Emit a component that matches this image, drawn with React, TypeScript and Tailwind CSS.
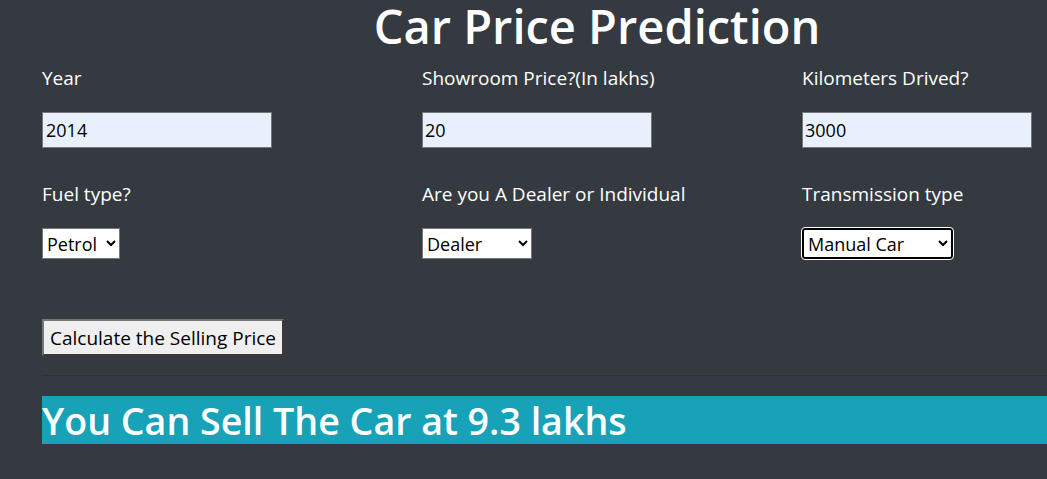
import { useState } from 'react';

const font = { fontFamily: '"Open Sans", "Noto Sans", sans-serif' };

function Label({ children }: { children: React.ReactNode }) {
    return <label className="block h-[36px] text-[19px] leading-[28px] text-white">{children}</label>;
}

export default function App() {
    const [year, setYear] = useState('2014');
    const [price, setPrice] = useState('20');
    const [kms, setKms] = useState('3000');

    return (
        <div className="min-h-[479px] w-full overflow-hidden bg-[#343a40]" style={font}>
            <h1 className="pl-[147px] pt-[1px] text-center text-[47px] font-semibold leading-[50px] text-white">
                Car Price Prediction
            </h1>
            <div className="mt-[13px] pl-[42px]">
                <div className="grid grid-cols-[380px_380px_1fr]">
                    <div>
                        <Label>Year</Label>
                        <input
                            value={year}
                            onChange={(e) => setYear(e.target.value)}
                            className="mt-[12px] h-[36px] w-[230px] border border-[#767676] bg-[#e8f0fe] px-[3px] text-[18px] text-black outline-none"
                        />
                    </div>
                    <div>
                        <Label>Showroom Price?(In lakhs)</Label>
                        <input
                            value={price}
                            onChange={(e) => setPrice(e.target.value)}
                            className="mt-[12px] h-[36px] w-[230px] border border-[#767676] bg-[#e8f0fe] px-[2px] text-[18px] text-black outline-none"
                        />
                    </div>
                    <div>
                        <Label>Kilometers Drived?</Label>
                        <input
                            value={kms}
                            onChange={(e) => setKms(e.target.value)}
                            className="mt-[12px] h-[36px] w-[230px] border border-[#767676] bg-[#e8f0fe] px-[2px] text-[18px] text-black outline-none"
                        />
                    </div>
                </div>
                <div className="mt-[32px] grid grid-cols-[380px_380px_1fr]">
                    <div>
                        <Label>Fuel type?</Label>
                        <select className="mt-[12px] h-[31px] w-[78px] border border-[#767676] bg-white text-[18px] text-black">
                            <option>Petrol</option>
                            <option>Diesel</option>
                            <option>CNG</option>
                        </select>
                    </div>
                    <div>
                        <Label>Are you A Dealer or Individual</Label>
                        <select className="mt-[12px] h-[31px] w-[110px] border border-[#767676] bg-white text-[18px] text-black">
                            <option>Dealer</option>
                            <option>Individual</option>
                        </select>
                    </div>
                    <div>
                        <Label>Transmission type</Label>
                        <select className="mt-[12px] h-[31px] w-[151px] rounded-[3px] border-2 border-black bg-white text-[18px] text-black outline outline-1 outline-white">
                            <option>Manual Car</option>
                            <option>Automatic Car</option>
                        </select>
                    </div>
                </div>
                <button className="mt-[60px] box-border h-[37px] border-2 border-t-[#767676] border-l-[#767676] border-r-[#3a3a3a] border-b-[#3a3a3a] bg-[#efefef] px-[6px] text-[19px] leading-[30px] text-black">
                    Calculate the Selling Price
                </button>
                <hr className="mt-[19px] border-t border-[#2c3136]" />
                <div className="mt-[20px] h-[48px] bg-[#17a2b8]">
                    <h2 className="text-[37.6px] font-semibold leading-[49px] text-white">
                        You Can Sell The Car at 9.3 lakhs
                    </h2>
                </div>
            </div>
        </div>
    );
}
